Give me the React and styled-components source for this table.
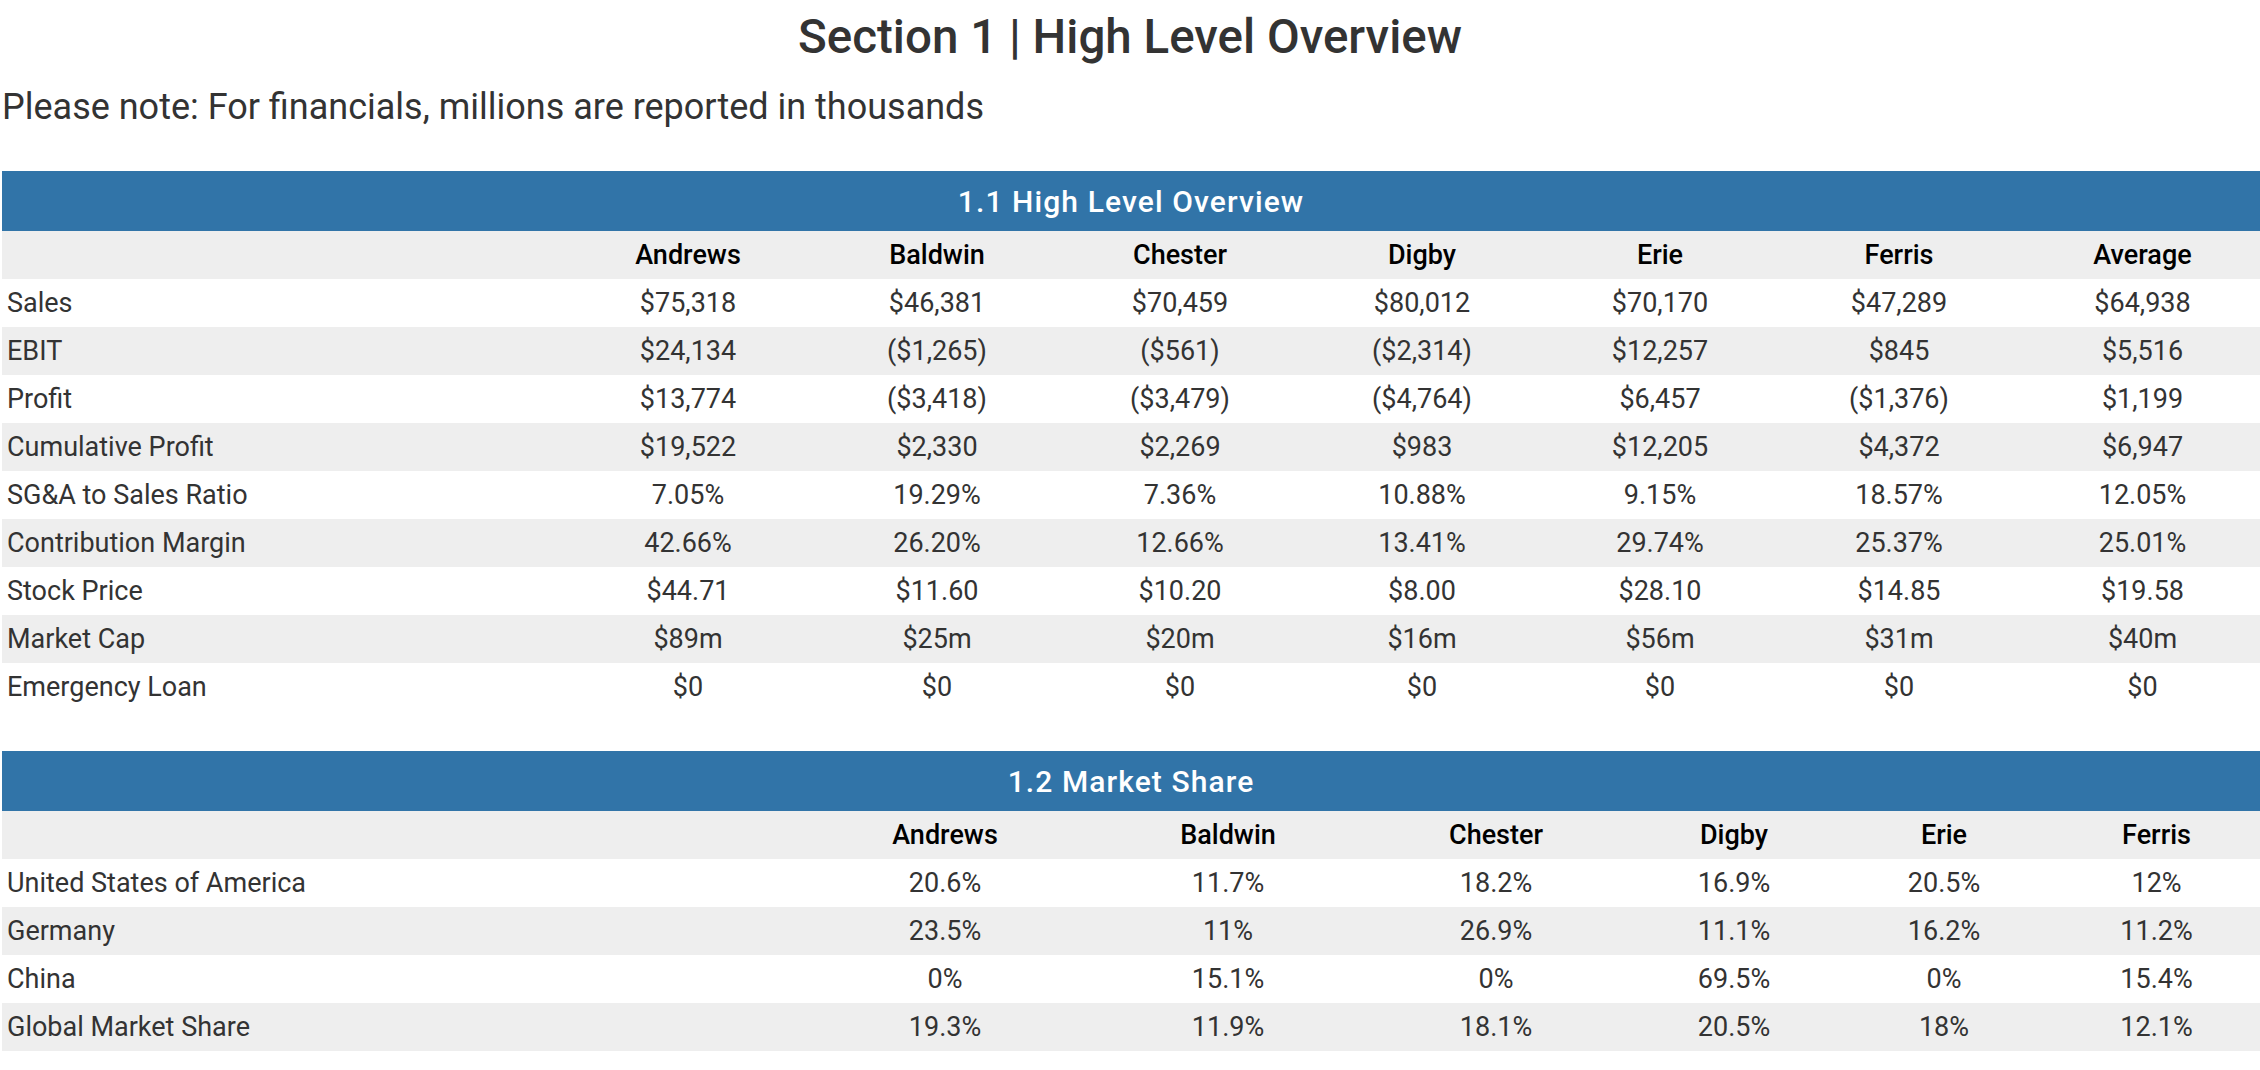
import React from 'react';
import styled, {createGlobalStyle} from 'styled-components';

const GlobalStyle = createGlobalStyle`
  body {
    margin: 0;
    background: #ffffff;
    font-family: Roboto, "Liberation Sans", Arial, sans-serif;
  }
`;

const Page = styled.div`
  padding-top: 8px;
  width: 2260px;
  box-sizing: border-box;
`;

const Title = styled.h1`
  margin: 0;
  text-align: center;
  font-size: 47.5px;
  font-weight: 500;
  line-height: 58px;
  color: #333333;
`;

const Note = styled.p`
  margin: 20px 0 0 2px;
  font-size: 36px;
  line-height: 42px;
  color: #333333;
`;

const Table = styled.table`
  margin: ${props => props.$top}px 0 0 2px;
  width: 2258px;
  table-layout: fixed;
  border-collapse: collapse;
  font-size: 27px;
  color: #333333;
`;

const Col = styled.col`
  width: ${props => props.$w}px;
`;

const Caption = styled.th`
  height: 60px;
  padding: 0;
  background: #3174a8;
  color: #ffffff;
  font-size: 30px;
  font-weight: 500;
  letter-spacing: 1.1px;
  text-align: center;
  vertical-align: middle;
`;

const Row = styled.tr`
  height: 48px;
  background: ${props => (props.$shade ? '#eeeeee' : '#ffffff')};
`;

const HeadCell = styled.th`
  padding: 0;
  font-weight: 500;
  color: #000000;
  text-align: center;
  vertical-align: middle;
  white-space: nowrap;
`;

const Label = styled.td`
  padding: 0 0 0 5px;
  text-align: left;
  vertical-align: middle;
  white-space: nowrap;
`;

const Cell = styled.td`
  padding: 0;
  text-align: center;
  vertical-align: middle;
  white-space: nowrap;
`;

const overview = {
    title: '1.1 High Level Overview',
    widths: [563, 246, 252, 234, 250, 226, 252, 235],
    columns: ['Andrews', 'Baldwin', 'Chester', 'Digby', 'Erie', 'Ferris', 'Average'],
    rows: [
        ['Sales', '$75,318', '$46,381', '$70,459', '$80,012', '$70,170', '$47,289', '$64,938'],
        ['EBIT', '$24,134', '($1,265)', '($561)', '($2,314)', '$12,257', '$845', '$5,516'],
        ['Profit', '$13,774', '($3,418)', '($3,479)', '($4,764)', '$6,457', '($1,376)', '$1,199'],
        ['Cumulative Profit', '$19,522', '$2,330', '$2,269', '$983', '$12,205', '$4,372', '$6,947'],
        ['SG&A to Sales Ratio', '7.05%', '19.29%', '7.36%', '10.88%', '9.15%', '18.57%', '12.05%'],
        ['Contribution Margin', '42.66%', '26.20%', '12.66%', '13.41%', '29.74%', '25.37%', '25.01%'],
        ['Stock Price', '$44.71', '$11.60', '$10.20', '$8.00', '$28.10', '$14.85', '$19.58'],
        ['Market Cap', '$89m', '$25m', '$20m', '$16m', '$56m', '$31m', '$40m'],
        ['Emergency Loan', '$0', '$0', '$0', '$0', '$0', '$0', '$0'],
    ],
};

const marketShare = {
    title: '1.2 Market Share',
    widths: [791, 304, 262, 274, 202, 218, 207],
    columns: ['Andrews', 'Baldwin', 'Chester', 'Digby', 'Erie', 'Ferris'],
    rows: [
        ['United States of America', '20.6%', '11.7%', '18.2%', '16.9%', '20.5%', '12%'],
        ['Germany', '23.5%', '11%', '26.9%', '11.1%', '16.2%', '11.2%'],
        ['China', '0%', '15.1%', '0%', '69.5%', '0%', '15.4%'],
        ['Global Market Share', '19.3%', '11.9%', '18.1%', '20.5%', '18%', '12.1%'],
    ],
};

const SectionTable = ({data, top}) => (
    <Table $top={top}>
        <colgroup>
            {data.widths.map((w, i) => <Col key={i} $w={w}/>)}
        </colgroup>
        <thead>
            <tr>
                <Caption colSpan={data.widths.length}>{data.title}</Caption>
            </tr>
            <Row $shade>
                <HeadCell/>
                {data.columns.map(name => <HeadCell key={name}>{name}</HeadCell>)}
            </Row>
        </thead>
        <tbody>
            {data.rows.map(([label, ...values], i) => (
                <Row key={label} $shade={i % 2 === 1}>
                    <Label>{label}</Label>
                    {values.map((v, j) => <Cell key={j}>{v}</Cell>)}
                </Row>
            ))}
        </tbody>
    </Table>
);

const App = () => (
    <Page>
        <GlobalStyle/>
        <Title>Section 1 | High Level Overview</Title>
        <Note>Please note: For financials, millions are reported in thousands</Note>
        <SectionTable data={overview} top={43}/>
        <SectionTable data={marketShare} top={40}/>
    </Page>
);

export default App;
